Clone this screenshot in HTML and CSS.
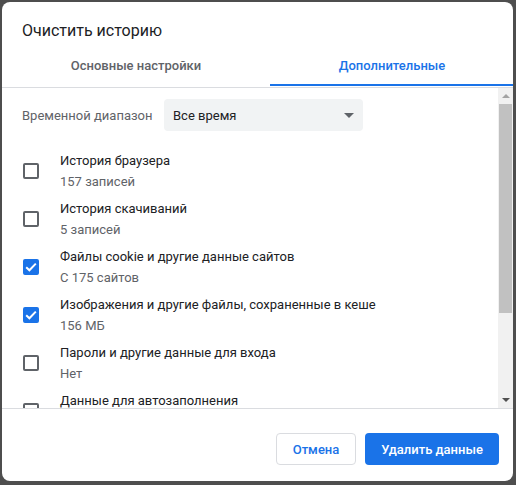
FILE: index.html
```html
<!DOCTYPE html>
<html lang="ru">
<head>
<meta charset="utf-8">
<title>Очистить историю</title>
<link rel="stylesheet" href="styles.css">
</head>
<body>
<div class="dialog">
  <div class="title">Очистить историю</div>
  <div class="tabs">
    <div class="tab">Основные настройки</div>
    <div class="tab active">Дополнительные</div>
  </div>
  <div class="body">
    <div class="content">
      <div class="range">
        <span class="range-label">Временной диапазон</span>
        <div class="select">
          <span>Все время</span>
          <svg class="caret" width="10" height="5" viewBox="0 0 10 5"><path d="M0 0h10L5 5z" fill="#5f6368"/></svg>
        </div>
      </div>
      <div class="row">
        <span class="cb"></span>
        <div class="text"><div class="t">История браузера</div><div class="s">157 записей</div></div>
      </div>
      <div class="row">
        <span class="cb"></span>
        <div class="text"><div class="t">История скачиваний</div><div class="s">5 записей</div></div>
      </div>
      <div class="row">
        <span class="cb checked"><svg width="12" height="10" viewBox="0 0 12 10"><path d="M1.2 5.2l3.2 3.1L10.8 1.6" fill="none" stroke="#fff" stroke-width="2"/></svg></span>
        <div class="text"><div class="t">Файлы cookie и другие данные сайтов</div><div class="s">С 175 сайтов</div></div>
      </div>
      <div class="row">
        <span class="cb checked"><svg width="12" height="10" viewBox="0 0 12 10"><path d="M1.2 5.2l3.2 3.1L10.8 1.6" fill="none" stroke="#fff" stroke-width="2"/></svg></span>
        <div class="text"><div class="t">Изображения и другие файлы, сохраненные в кеше</div><div class="s">156 МБ</div></div>
      </div>
      <div class="row">
        <span class="cb"></span>
        <div class="text"><div class="t">Пароли и другие данные для входа</div><div class="s">Нет</div></div>
      </div>
      <div class="row">
        <span class="cb"></span>
        <div class="text"><div class="t">Данные для автозаполнения</div><div class="s">&nbsp;</div></div>
      </div>
    </div>
    <div class="scrollbar">
      <div class="sb-btn"><svg width="8" height="4" viewBox="0 0 8 4"><path d="M0 4L4 0l4 4z" fill="#a3a3a3"/></svg></div>
      <div class="sb-track"><div class="sb-thumb"></div></div>
      <div class="sb-btn"><svg width="8" height="4" viewBox="0 0 8 4"><path d="M0 0h8L4 4z" fill="#505050"/></svg></div>
    </div>
  </div>
  <div class="footer">
    <button class="btn cancel">Отмена</button>
    <button class="btn primary">Удалить данные</button>
  </div>
</div>
</body>
</html>
```
FILE: styles.css
```css
html, body {
  margin: 0;
  padding: 0;
}
body {
  background: #4e4e4e;
  font-family: Roboto, "Noto Sans", sans-serif;
  color: #202124;
  width: 516px;
  height: 485px;
  overflow: hidden;
}
.dialog {
  margin: 2px 0 0 2px;
  width: 511px;
  height: 479px;
  background: #fff;
  border-radius: 8px;
  overflow: hidden;
  display: flex;
  flex-direction: column;
}
.title {
  padding: 19px 20px 0;
  height: 20px;
  line-height: 20px;
  font-size: 16px;
  color: #202124;
}
.tabs {
  margin-top: 3px;
  display: grid;
  grid-template-columns: 244px 244px;
  column-gap: 12px;
  padding-left: 12px;
  padding-bottom: 1px;
  border-bottom: 1px solid #dadce0;
  height: 42px;
}
.tab {
  height: 42px;
  line-height: 44px;
  text-align: center;
  font-size: 13px;
  font-weight: 500;
  color: #5f6368;
  box-sizing: border-box;
}
.tab.active {
  color: #1a73e8;
  border-bottom: 2px solid #1a73e8;
}
.body {
  height: 320px;
  border-bottom: 1px solid #dadce0;
  display: flex;
  overflow: hidden;
}
.content {
  flex: 1;
  padding-top: 11px;
  overflow: hidden;
}
.range {
  display: flex;
  align-items: center;
  padding-left: 20px;
  height: 32px;
  margin-bottom: 16px;
  font-size: 13px;
}
.range-label {
  color: #5f6368;
  width: 142px;
}
.select {
  width: 199px;
  height: 32px;
  box-sizing: border-box;
  background: #f1f3f4;
  border-radius: 4px;
  display: flex;
  align-items: center;
  justify-content: space-between;
  padding: 0 8px 0 9px;
  color: #202124;
}
.caret {
  margin-right: 1px;
}
.row {
  height: 48px;
  display: flex;
  align-items: center;
  padding-left: 21px;
  flex-shrink: 0;
}
.cb {
  width: 16px;
  height: 16px;
  box-sizing: border-box;
  border: 2px solid #5f6368;
  border-radius: 2px;
  margin-right: 21px;
  display: flex;
  align-items: center;
  justify-content: center;
  flex-shrink: 0;
}
.cb.checked {
  background: #1a73e8;
  border-color: #1a73e8;
}
.text {
  font-size: 13px;
  line-height: 20px;
}
.t {
  color: #202124;
}
.s {
  color: #5f6368;
  padding-top: 1px;
}
.scrollbar {
  width: 15px;
  background: #f1f1f1;
  display: flex;
  flex-direction: column;
}
.sb-btn {
  height: 16px;
  display: flex;
  align-items: center;
  justify-content: center;
}
.sb-track {
  flex: 1;
  padding: 0 1px;
}
.sb-thumb {
  height: 209px;
  background: #c1c1c1;
}
.footer {
  flex: 1;
  display: flex;
  justify-content: flex-end;
  align-items: flex-start;
  padding: 24px 14px 0 0;
  gap: 9px;
}
.btn {
  height: 32px;
  border-radius: 4px;
  font-family: Roboto, "Noto Sans", sans-serif;
  font-size: 13px;
  font-weight: 500;
  cursor: pointer;
}
.cancel {
  width: 80px;
  background: #fff;
  color: #1a73e8;
  border: 1px solid #dadce0;
}
.primary {
  width: 134px;
  background: #1a73e8;
  color: #fff;
  border: none;
}
```
